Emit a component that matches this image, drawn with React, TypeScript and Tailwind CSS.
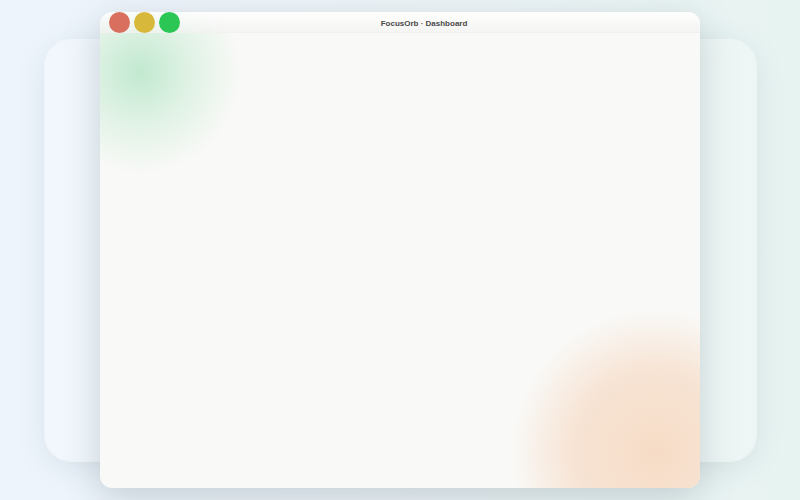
export default function App() {
  return (
    <div className="h-[500px] w-[800px] overflow-hidden bg-gradient-to-r from-[#edf4fc] via-[#eef4f8] to-[#e7f3f1] font-['Liberation_Sans','Inter',sans-serif]">
      <div className="grid h-full w-full place-items-center">
        {/* Back card */}
        <div className="col-start-1 row-start-1 h-[421px] w-[711px] rounded-[26px] bg-white/25 shadow-[0_6px_28px_rgba(110,135,150,0.16)] ring-1 ring-white/50" />

        {/* Front window */}
        <div className="relative col-start-1 row-start-1 flex h-[476px] w-[600px] flex-col overflow-hidden rounded-[12px] bg-[#f9f9f7] shadow-[0_10px_36px_rgba(90,110,120,0.28)]">
          {/* Blobs */}
          <div className="pointer-events-none absolute left-[-65px] top-[-45px] h-[210px] w-[210px] rounded-full bg-[radial-gradient(circle,rgba(175,228,195,0.75)_0%,rgba(195,234,208,0.45)_35%,rgba(249,249,247,0)_68%)]" />
          <div className="pointer-events-none absolute bottom-[-110px] right-[-100px] h-[290px] w-[290px] rounded-full bg-[radial-gradient(circle,rgba(246,220,198,1)_0%,rgba(247,224,206,0.85)_40%,rgba(249,249,247,0)_70%)]" />

          {/* Title bar */}
          <div className="relative flex h-[21px] shrink-0 items-center border-b border-[#efefed]/80 bg-gradient-to-b from-white/80 to-[#f3f3f2]/70">
            <div className="flex items-center gap-[4px] pl-[9px]">
              <span className="h-[21px] w-[21px] rounded-full bg-[#d9705f]" />
              <span className="h-[21px] w-[21px] rounded-full bg-[#d8b83b]" />
              <span className="h-[21px] w-[21px] rounded-full bg-[#2cc655]" />
            </div>
            <div className="absolute inset-0 flex items-center justify-center pl-[48px] pt-[3px] text-[8px] font-bold leading-none text-[#4a4a4a]">
              FocusOrb · Dashboard
            </div>
          </div>

          <div className="flex-1" />
        </div>
      </div>
    </div>
  );
}
